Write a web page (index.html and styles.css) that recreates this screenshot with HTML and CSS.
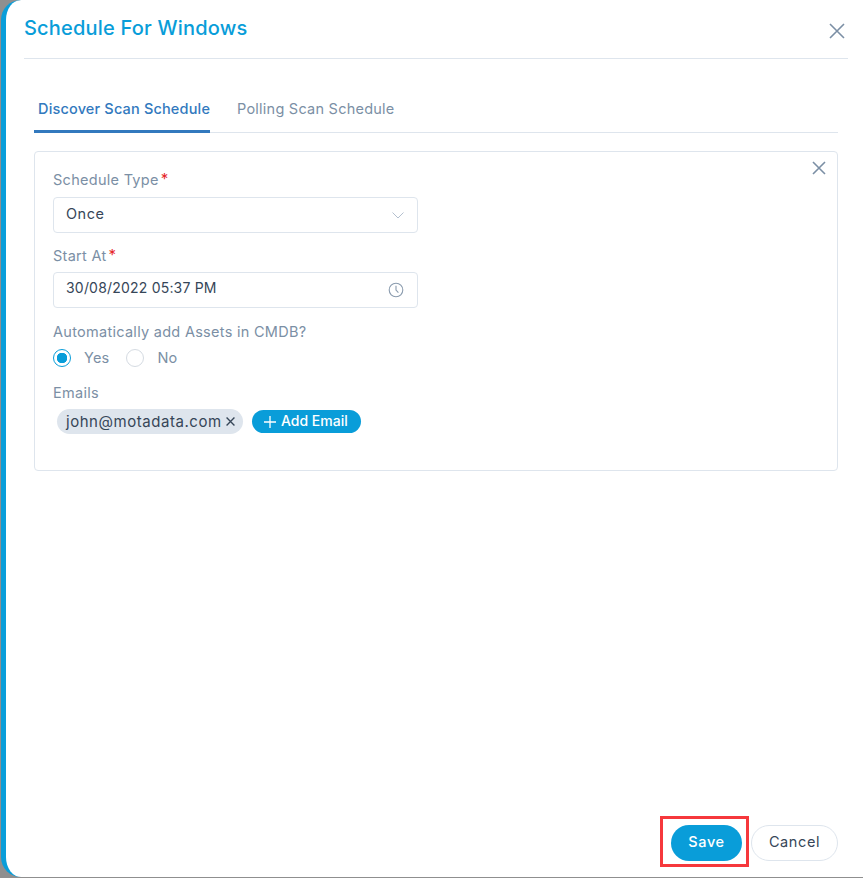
FILE: index.html
```html
<!DOCTYPE html>
<html lang="en">
<head>
<meta charset="utf-8">
<title>Schedule For Windows</title>
<link rel="stylesheet" href="styles.css">
</head>
<body>
<div class="modal">
  <header class="modal-head">
    <h1 class="modal-title">Schedule For Windows</h1>
    <svg class="icon-close" width="16" height="16" viewBox="0 0 16 16"><path d="M1 1l14 14M15 1L1 15"/></svg>
  </header>
  <div class="modal-body">
    <nav class="tabs">
      <span class="tab tab-active">Discover Scan Schedule</span>
      <span class="tab">Polling Scan Schedule</span>
    </nav>
    <section class="card">
      <svg class="icon-card-close" width="14" height="14" viewBox="0 0 14 14"><path d="M1 1l12 12M13 1L1 13"/></svg>
      <div class="label label-first">Schedule Type<sup class="req">*</sup></div>
      <div class="field field-select">
        <span>Once</span>
        <svg class="chev" width="12" height="7" viewBox="0 0 12 7"><path d="M.5.5L6 6 11.5.5"/></svg>
      </div>
      <div class="label label-start">Start At<sup class="req">*</sup></div>
      <div class="field field-date">
        <span>30/08/2022 05:37 PM</span>
        <svg class="clock" width="16" height="16" viewBox="0 0 16 16"><circle cx="8" cy="8" r="6.8"/><path d="M8 3.8V8l2.4 2.6"/></svg>
      </div>
      <div class="label label-auto">Automatically add Assets in CMDB?</div>
      <div class="radios">
        <span class="radio radio-on"></span><span class="radio-text">Yes</span>
        <span class="radio"></span><span class="radio-text">No</span>
      </div>
      <div class="label label-emails">Emails</div>
      <div class="chips">
        <span class="chip">john@motadata.com<svg class="chip-x" width="8" height="8" viewBox="0 0 8 8"><path d="M.5.5l7 7M7.5.5l-7 7"/></svg></span>
        <span class="add"><svg class="plus" width="12" height="12" viewBox="0 0 12 12"><path d="M6 0v12M0 6h12"/></svg><span class="add-text">Add Email</span></span>
      </div>
    </section>
  </div>
  <footer class="modal-foot">
    <span class="btn btn-save">Save</span>
    <span class="btn btn-cancel">Cancel</span>
    <span class="highlight"></span>
  </footer>
</div>
</body>
</html>
```
FILE: styles.css
```css
* { box-sizing: border-box; }
html, body { margin: 0; height: 100%; }
body {
  background: #8f8f8f;
  font-family: "Inter", "Liberation Sans", sans-serif;
  font-size: 14px;
  color: #364658;
  overflow: hidden;
}
.modal {
  width: 862px;
  height: 877px;
  margin-left: 1px;
  background: #fff;
  border-left: 5px solid #099dd9;
  border-radius: 20px 0 0 20px;
  display: flex;
  flex-direction: column;
}
.modal-head {
  height: 59px;
  margin: 0 15px 0 18px;
  border-bottom: 1px solid #dee5ed;
  display: flex;
  align-items: center;
  justify-content: space-between;
}
.modal-title {
  margin: 0 0 3px;
  font-size: 20px;
  font-weight: 500;
  color: #099dd9;
  letter-spacing: 0.2px;
}
.icon-close { margin: 4px 3px 0 0; }
.icon-close path, .icon-card-close path { fill: none; stroke: #7b8fa5; stroke-width: 1.6; }
.modal-body { flex: 1; padding: 0 25px 0 28px; }
.tabs {
  height: 74px;
  border-bottom: 1px solid #dee5ed;
  display: flex;
  align-items: flex-end;
  gap: 23px;
}
.tab {
  height: 50px;
  padding: 10px 0 0 4px;
  line-height: 33px;
  font-size: 14.5px;
  font-weight: 400;
  color: #7b8fa5;
  letter-spacing: 0.24px;
}
.tab-active {
  color: #3279be;
  width: 176px;
  border-bottom: 3px solid #3279be;
  margin-bottom: -1px;
  height: 51px;
  white-space: nowrap;
  font-weight: 500;
  letter-spacing: 0.17px;
}
.card {
  position: relative;
  margin-top: 18px;
  height: 320px;
  border: 1px solid #dee5ed;
  border-radius: 4px;
  padding: 0 18px;
}
.icon-card-close { position: absolute; top: 9px; right: 11px; }
.label { font-size: 14.5px; line-height: 20px; color: #7b8fa5; letter-spacing: 0.28px; }
.label-first { margin-top: 18px; }
.label-start { margin-top: 13px; }
.label-auto { margin-top: 14px; }
.label-emails { margin-top: 15px; }
.req { color: #e5262a; font-size: 15px; line-height: 0; vertical-align: 1px; margin-left: 2px; letter-spacing: 0; }
.field {
  width: 365px;
  height: 36px;
  margin-top: 7px;
  padding: 0 13px 0 12px;
  border: 1px solid #dee5ed;
  border-radius: 4px;
  display: flex;
  align-items: center;
  justify-content: space-between;
  color: #364658;
}
.field-select { font-size: 14.5px; letter-spacing: 0.5px; padding-bottom: 3px; }
.field-date { margin-top: 6px; padding-bottom: 6px; letter-spacing: 0.2px; }
.chev { margin-top: 3px; }
.chev path { fill: none; stroke: #b4c0cf; stroke-width: 1; }
.clock { margin: 6px 0 0; }
.clock circle, .clock path { fill: none; stroke: #8a9bae; stroke-width: 1.1; }
.radios { margin-top: 6px; height: 20px; display: flex; align-items: center; font-size: 14.5px; color: #7b8fa5; letter-spacing: 0.2px; }
.radio {
  width: 18px;
  height: 18px;
  border: 1px solid #d5dbe2;
  border-radius: 50%;
  flex: none;
}
.radio-on {
  border-color: #099dd9;
  background: radial-gradient(circle, #099dd9 0 5px, #fff 5.5px);
}
.radio-text { margin: -2px 17px 0 13px; }
.chips { margin-top: 6px; margin-left: 4px; display: flex; align-items: center; gap: 9px; }
.chip {
  width: 186px;
  height: 25px;
  padding: 0 0 1px 9px;
  border-radius: 13px;
  background: #dee5ed;
  display: flex;
  align-items: center;
  font-size: 15px;
  letter-spacing: 0.54px;
  white-space: nowrap;
}
.chip-x { margin: 1px 0 0 4px; width: 9px; height: 9px; }
.chip-x path { fill: none; stroke: #364658; stroke-width: 1.2; }
.add {
  width: 109px;
  height: 23px;
  padding-left: 12px;
  border-radius: 12px;
  background: #099dd9;
  color: #fff;
  font-weight: 500;
  display: flex;
  align-items: center;
  gap: 5px;
  white-space: nowrap;
}
.add-text { margin-top: -2px; }
.plus path { fill: none; stroke: #fff; stroke-width: 1.3; }
.modal-foot {
  position: relative;
  height: 52px;
  padding: 0 25px 16px 0;
  display: flex;
  justify-content: flex-end;
  gap: 9px;
}
.btn {
  height: 36px;
  padding-bottom: 3px;
  border-radius: 18px;
  display: flex;
  align-items: center;
  justify-content: center;
  font-size: 14.5px;
  font-weight: 500;
  letter-spacing: 0.6px;
}
.btn-save { width: 71px; background: #099dd9; color: #fff; }
.btn-cancel { width: 87px; border: 1px solid #dee5ed; color: #364658; font-weight: 400; }
.highlight {
  position: absolute;
  top: -9px;
  left: 654px;
  width: 89px;
  height: 51px;
  border: 3px solid #f6383c;
}
```
